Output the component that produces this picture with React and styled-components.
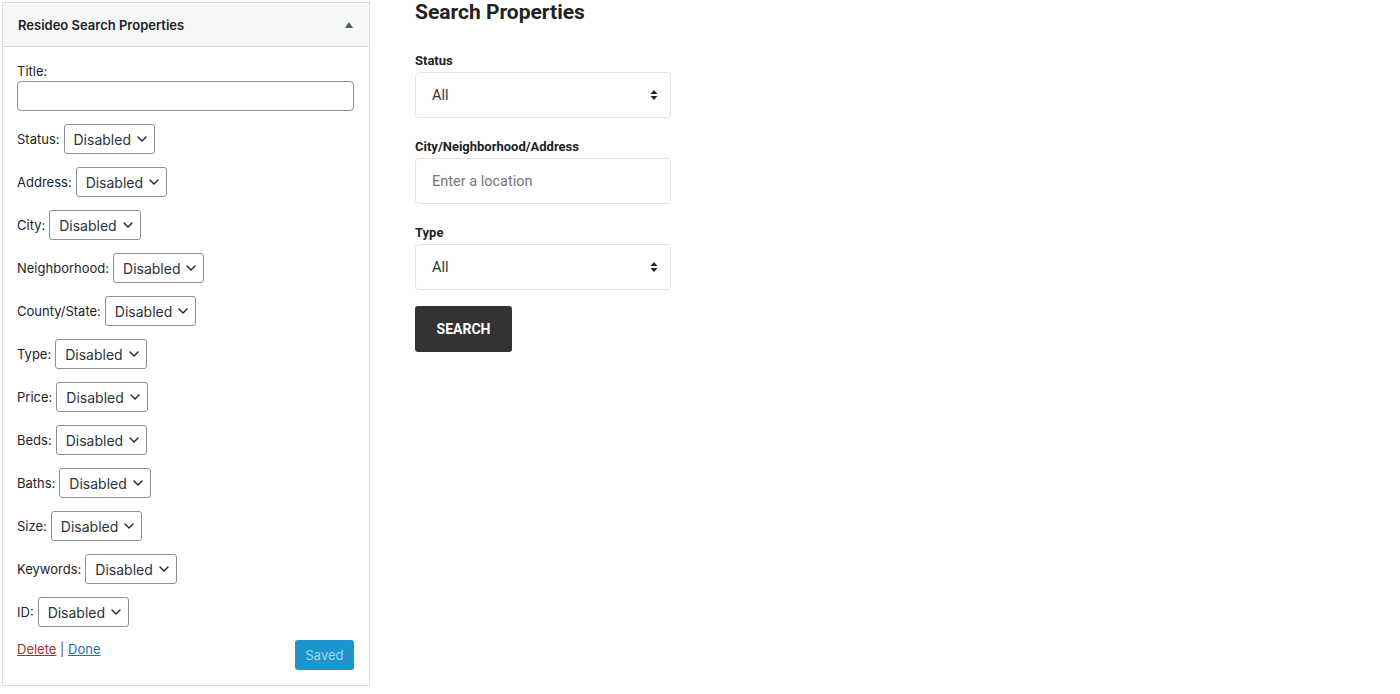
import styled, { createGlobalStyle } from 'styled-components';

const GlobalStyle = createGlobalStyle`
  html, body {
    margin: 0;
    padding: 0;
    background: #ffffff;
  }
  body {
    font-family: Inter, "Liberation Sans", sans-serif;
    color: #1d2327;
  }
`;

const fields = [
  'Status',
  'Address',
  'City',
  'Neighborhood',
  'County/State',
  'Type',
  'Price',
  'Beds',
  'Baths',
  'Size',
  'Keywords',
  'ID'
];

const Chevron = () => (
  <svg width="12" height="12" viewBox="0 0 12 12" fill="none">
    <path d="M2 4l4 4 4-4" stroke="#1d2327" strokeWidth="1.4" strokeLinecap="round" strokeLinejoin="round" />
  </svg>
);

const SortArrows = () => (
  <svg width="8" height="12" viewBox="0 0 8 12">
    <path d="M4 1L7.5 5H0.5Z" fill="#222" />
    <path d="M4 11L7.5 7H0.5Z" fill="#222" />
  </svg>
);

const App = () => {
  return (
    <>
      <GlobalStyle />
      <Page>
        <Widget>
          <WidgetHeader>
            <WidgetTitle>Resideo Search Properties</WidgetTitle>
            <Caret />
          </WidgetHeader>
          <WidgetBody>
            <FieldLabel>Title:</FieldLabel>
            <TitleInput />
            {fields.map((f) => (
              <OptionRow key={`${f}RowKey`}>
                <span>{f}:</span>
                <MiniSelect>
                  Disabled
                  <Chevron />
                </MiniSelect>
              </OptionRow>
            ))}
            <Actions>
              <Links>
                <DeleteLink>Delete</DeleteLink> | <DoneLink>Done</DoneLink>
              </Links>
              <SavedButton>Saved</SavedButton>
            </Actions>
          </WidgetBody>
        </Widget>

        <Preview>
          <Heading>Search Properties</Heading>
          <Group>
            <GroupLabel>Status</GroupLabel>
            <Box>
              All
              <SortArrows />
            </Box>
          </Group>
          <Group>
            <GroupLabel>City/Neighborhood/Address</GroupLabel>
            <Box placeholder>Enter a location</Box>
          </Group>
          <Group>
            <GroupLabel>Type</GroupLabel>
            <Box>
              All
              <SortArrows />
            </Box>
          </Group>
          <SearchButton>SEARCH</SearchButton>
        </Preview>
      </Page>
    </>
  );
};

const Page = styled.div`
  display: flex;
  align-items: flex-start;
  gap: 45px;
  padding: 2px 0 0 2px;
`;

const Widget = styled.div`
  width: 368px;
  border: 1px solid #dcdcde;
  box-sizing: border-box;
  background: #fff;
`;

const WidgetHeader = styled.div`
  height: 43px;
  display: flex;
  align-items: center;
  justify-content: space-between;
  padding: 0 16px 0 15px;
  background: #f6f7f7;
  border-bottom: 1px solid #dcdcde;
`;

const WidgetTitle = styled.span`
  font-size: 13px;
  font-weight: 600;
  color: #1d2327;
`;

const Caret = styled.span`
  width: 0;
  height: 0;
  border-left: 4px solid transparent;
  border-right: 4px solid transparent;
  border-bottom: 6px solid #50575e;
`;

const WidgetBody = styled.div`
  padding: 15px 15px 15px 14px;
  font-size: 13px;
`;

const FieldLabel = styled.div`
  line-height: 18px;
  margin-bottom: 1px;
`;

const TitleInput = styled.div`
  height: 30px;
  border: 1px solid #8c8f94;
  border-radius: 4px;
  box-sizing: border-box;
  margin-bottom: 13px;
`;

const OptionRow = styled.div`
  display: flex;
  align-items: center;
  gap: 4px;
  height: 30px;
  margin-bottom: 13px;
  font-size: 13px;
`;

const MiniSelect = styled.div`
  display: flex;
  align-items: center;
  gap: 5px;
  height: 30px;
  box-sizing: border-box;
  padding: 0 6px 0 9px;
  border: 1px solid #8c8f94;
  border-radius: 3px;
  font-size: 14px;
  color: #2c3338;
`;

const Actions = styled.div`
  display: flex;
  justify-content: space-between;
  align-items: flex-start;
`;

const Links = styled.div`
  padding-top: 1px;
  line-height: 16px;
  color: #50575e;
`;

const DeleteLink = styled.a`
  color: #b32d2e;
  text-decoration: underline;
  cursor: pointer;
`;

const DoneLink = styled.a`
  color: #2271b1;
  text-decoration: underline;
  cursor: pointer;
`;

const SavedButton = styled.div`
  width: 59px;
  height: 30px;
  display: flex;
  align-items: center;
  justify-content: center;
  background: #1c95cc;
  border-radius: 3px;
  color: #a7d4eb;
  font-size: 13px;
`;

const Preview = styled.div`
  width: 256px;
  font-family: Roboto, "Liberation Sans", sans-serif;
  color: #222;
`;

const Heading = styled.h2`
  margin: -3px 0 0 0;
  font-size: 21px;
  line-height: 26px;
  font-weight: 700;
  color: #222;
`;

const Group = styled.div`
  margin-top: 28px;
  & + & {
    margin-top: 21px;
  }
`;

const GroupLabel = styled.div`
  font-size: 13px;
  font-weight: 700;
  line-height: 15px;
  margin-bottom: 4px;
`;

const Box = styled.div`
  height: 46px;
  box-sizing: border-box;
  display: flex;
  align-items: center;
  justify-content: space-between;
  padding: 0 12px 0 16px;
  border: 1px solid #e4e4e4;
  border-radius: 4px;
  font-size: 14.5px;
  color: ${(p) => (p.placeholder ? '#777' : '#333')};
`;

const SearchButton = styled.div`
  margin-top: 16px;
  width: 97px;
  height: 46px;
  display: flex;
  align-items: center;
  justify-content: center;
  background: #333;
  border-radius: 3px;
  color: #fff;
  font-size: 14px;
  font-weight: 700;
`;

export default App;
